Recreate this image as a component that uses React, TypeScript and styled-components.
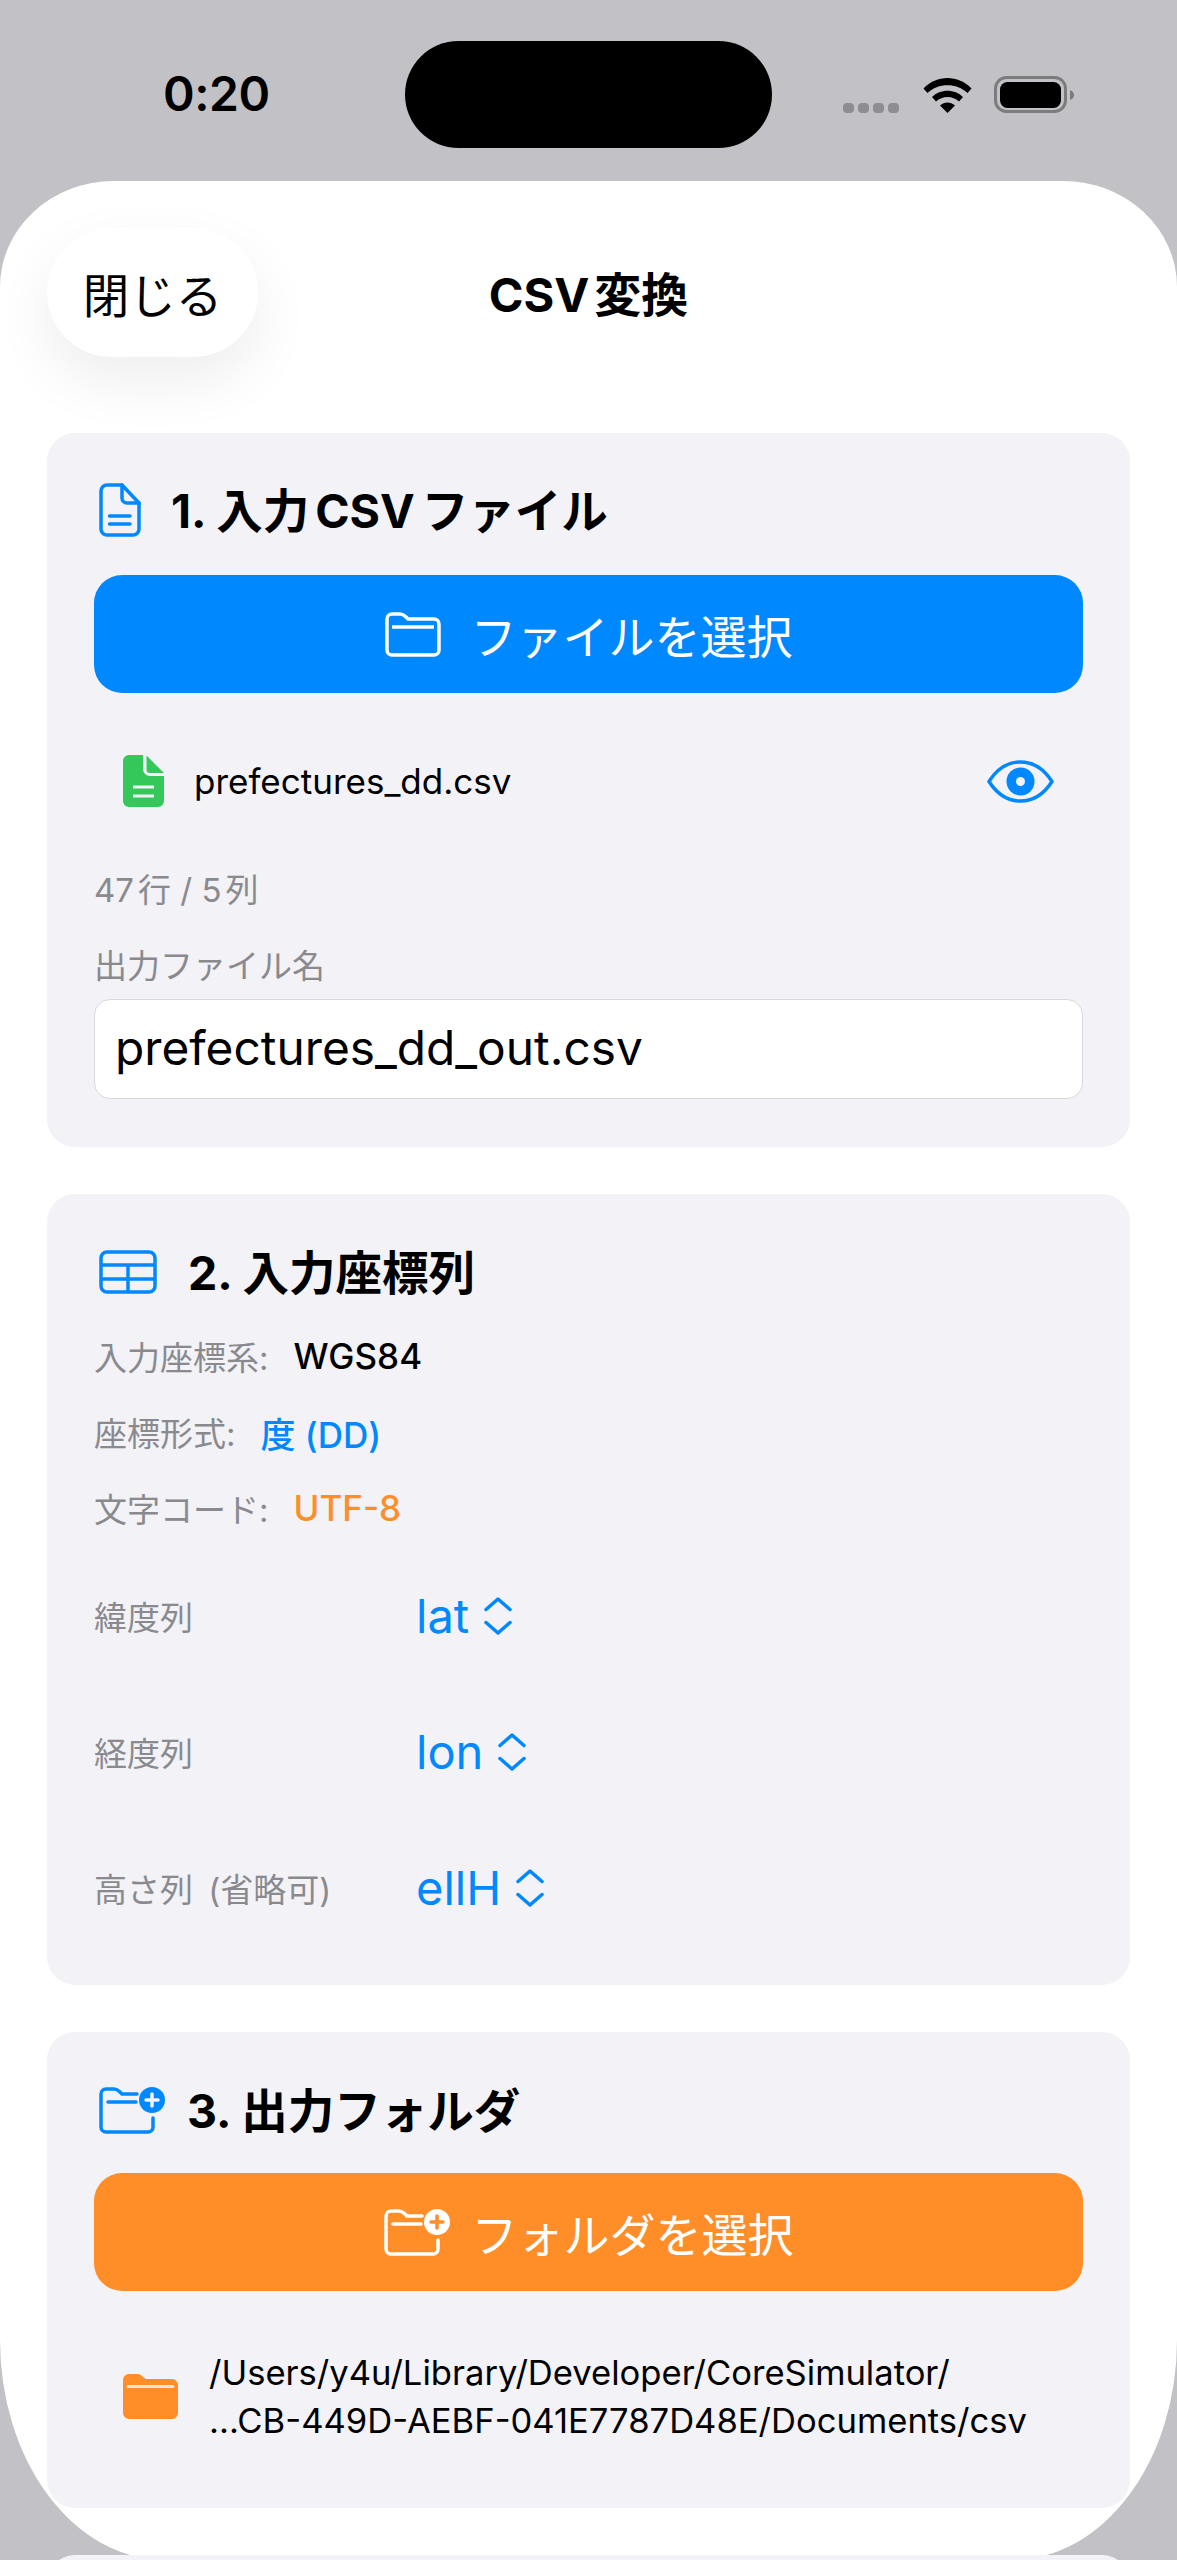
import React from 'react';
import styled, { createGlobalStyle } from 'styled-components';

const BLUE = '#0088ff';
const ORANGE = '#ff8d28';
const GREEN = '#34c759';
const GRAY = '#8a8a8e';
const CARD = '#f2f2f7';

const GlobalStyle = createGlobalStyle`
  html, body {
    margin: 0;
    padding: 0;
    background: #c2c1c6;
  }
  body {
    font-family: Inter, "Noto Sans CJK JP", sans-serif;
    color: #000;
  }
  #root {
    height: 2560px;
    overflow: hidden;
  }
`;

const StatusBar = styled.div`
  display: grid;
  grid-template-columns: 405px 367px 1fr;
  height: 181px;
`;

const Time = styled.div`
  align-self: center;
  padding: 0 0 0 163px;
  margin-top: 6px;
  font-size: 48px;
  font-weight: 600;
  letter-spacing: -0.5px;
`;

const Island = styled.div`
  margin-top: 41px;
  height: 107px;
  background: #000;
  border-radius: 54px;
`;

const StatusIcons = styled.div`
  display: flex;
  align-items: flex-start;
  padding: 76px 0 0 71px;
`;

const Sheet = styled.div`
  height: 2379px;
  background: #fff;
  border-radius: 114px 114px 0 0 / 106px 106px 0 0;
  border-bottom-left-radius: 165px 220px;
  border-bottom-right-radius: 165px 220px;
  padding: 47px 47px 0;
  box-sizing: border-box;
`;

const Header = styled.div`
  display: grid;
  grid-template-columns: 1fr auto 1fr;
  align-items: center;
  margin-bottom: 76px;
`;

const CloseButton = styled.div`
  justify-self: start;
  width: 211px;
  height: 129px;
  border-radius: 65px;
  background: #fff;
  box-shadow: 0 24px 60px rgba(0, 0, 0, 0.07);
  display: flex;
  align-items: center;
  justify-content: center;
  font-size: 46.500px;
`;

const SheetTitle = styled.div`
  font-size: 47px;
  font-weight: 700;
  margin-top: -3px;
`;

/* SwiftUI puts a little air between latin and kana, the font does not */
const Latin = styled.span<{ $l?: number; $r?: number }>`
  margin-left: ${p => p.$l ?? 0}px;
  margin-right: ${p => p.$r ?? 0}px;
`;

const Card = styled.section<{ $top: number; $bottom: number }>`
  background: ${CARD};
  border-radius: 28px;
  padding: ${p => p.$top}px 47px ${p => p.$bottom}px;
  margin-bottom: 47px;
`;

const TitleRow = styled.div<{ $gap: number }>`
  display: flex;
  align-items: center;
  height: 54px;
  padding-left: 5px;
  gap: ${p => p.$gap}px;
  color: ${BLUE};
`;

const TitleText = styled.h2`
  margin: -5px 0 0;
  font-size: 46.500px;
  font-weight: 700;
  color: #000;
`;

const ActionButton = styled.div<{ $color: string; $gap: number; $mt: number }>`
  margin-top: ${p => p.$mt}px;
  height: 118px;
  border-radius: 28px;
  background: ${p => p.$color};
  color: #fff;
  display: flex;
  align-items: center;
  justify-content: center;
  gap: ${p => p.$gap}px;
  font-size: 46px;
  font-weight: 400;
`;

const PathRow = styled.div<{ $mt: number; $gap: number; $size: number }>`
  margin-top: ${p => p.$mt}px;
  display: flex;
  align-items: center;
  padding-left: 29px;
  gap: ${p => p.$gap}px;
  font-size: ${p => p.$size}px;
  line-height: 48px;
`;

const FileName = styled.div`
  flex: 1;
`;

const EyeSlot = styled.div`
  display: flex;
  color: ${BLUE};
  padding-right: 29px;
`;

const Caption = styled.div<{ $mt: number }>`
  margin-top: ${p => p.$mt}px;
  font-size: 33px;
  line-height: 40px;
  color: ${GRAY};
`;

const NameInput = styled.div`
  margin-top: 13px;
  height: 100px;
  box-sizing: border-box;
  background: #fff;
  border: 1.5px solid #d9d9dd;
  border-radius: 16px;
  padding: 0 0 3px 20px;
  display: flex;
  align-items: center;
  font-size: 47.800px;
`;

const InfoList = styled.div`
  margin-top: 37px;
  display: flex;
  flex-direction: column;
  gap: 36px;
`;

const InfoRow = styled.div`
  display: flex;
  align-items: center;
  height: 40px;
  gap: 25px;
  font-size: 33px;
  color: ${GRAY};
`;

const InfoValue = styled.span<{ $color: string }>`
  font-size: 35px;
  font-weight: 500;
  color: ${p => p.$color};
`;

const PickerList = styled.div`
  margin-top: 59px;
  display: flex;
  flex-direction: column;
  gap: 80px;
`;

const PickerRow = styled.div`
  display: grid;
  grid-template-columns: 322px 1fr;
  align-items: center;
  height: 56px;
  font-size: 33px;
  word-spacing: 6px;
  color: ${GRAY};
`;

const PickerValue = styled.div`
  display: flex;
  align-items: center;
  gap: 15px;
  font-size: 47px;
  color: ${BLUE};
`;

const NextCard = styled.div`
  margin-top: 1px;
  height: 300px;
  background: ${CARD};
  border-radius: 28px;
`;

const CellDots = () => (
  <svg width="57" height="10" viewBox="0 0 57 10" style={{ marginTop: 27 }}>
    {[0, 15, 30, 45].map(x => (
      <rect key={x} x={x} width="11" height="10" rx="4" fill="#8e8e92" />
    ))}
  </svg>
);

const Wifi = () => (
  <svg width="49" height="36" viewBox="0 0 49 36" style={{ marginLeft: 23, marginTop: 1 }}>
    <path d="M0.5 11.5 C13.5 -2.5 35.5 -2.5 48.5 11.5 L44.5 16 C34 5.5 15 5.5 4.5 16Z" fill="#000" />
    <path d="M9 20 C17 11.5 32 11.5 40 20 L36 24.5 C29.5 18.5 19.5 18.5 13 24.5Z" fill="#000" />
    <path d="M17 28.5 C21.5 24.5 27.5 24.5 32 28.5 L24.5 36Z" fill="#000" />
  </svg>
);

const Battery = () => (
  <svg width="81" height="38" viewBox="0 0 81 38" style={{ marginLeft: 22 }}>
    <rect x="1.5" y="1.5" width="70" height="34" rx="11" fill="none" stroke="#7c7c7e" strokeWidth="3" />
    <rect x="6" y="6" width="61" height="26" rx="7.5" fill="#000" />
    <path d="M76 14 C79 15 80 17 80 19 C80 21 79 23 76 24Z" fill="#7c7c7e" />
  </svg>
);

const DocOutline = () => (
  <svg width="42" height="54" viewBox="0 0 42 54" fill="none" stroke="currentColor" strokeWidth="3.500" strokeLinejoin="round" strokeLinecap="round">
    <path d="M8 2H23L40 20V46A6 6 0 0 1 34 52H8A6 6 0 0 1 2 46V8A6 6 0 0 1 8 2Z" />
    <path d="M23 2V15A5 5 0 0 0 28 20H40" />
    <path d="M10.500 33H31M10.500 41H31" />
  </svg>
);

const DocFilled = () => (
  <svg width="41" height="52" viewBox="0 0 41 52">
    <path d="M6 0H20V14A7 7 0 0 0 27 21H41V46A6 6 0 0 1 35 52H6A6 6 0 0 1 0 46V6A6 6 0 0 1 6 0Z" fill={GREEN} />
    <path d="M23.500 0.500 L41 18H27A3.500 3.500 0 0 1 23.500 14.500Z" fill={GREEN} />
    <path d="M10 32H31M10 41H31" stroke={CARD} strokeWidth="3" />
  </svg>
);

const Eye = () => (
  <svg width="67" height="43" viewBox="0 0 67 43" style={{ display: 'block' }}>
    <path d="M2 21.500C10 9 21 2 33.500 2S57 9 65 21.500C57 34 46 41 33.500 41S10 34 2 21.500Z" fill="none" stroke="currentColor" strokeWidth="3.500" strokeLinejoin="round" />
    <circle cx="33.500" cy="21.500" r="14" fill="currentColor" />
    <circle cx="33.500" cy="21.500" r="4.500" fill={CARD} />
  </svg>
);

const FolderOutline = () => (
  <svg width="56" height="45" viewBox="0 0 56 45" fill="none" stroke="currentColor" strokeWidth="3.500" strokeLinejoin="round">
    <path d="M2 7A5 5 0 0 1 7 2H15C18 2 19 3 21 5L23 7H49A5 5 0 0 1 54 12V38A5 5 0 0 1 49 43H7A5 5 0 0 1 2 38Z" />
    <path d="M7 15H49" />
  </svg>
);

const FolderFilled = () => (
  <svg width="55" height="45" viewBox="0 0 55 45">
    <path d="M0 6A6 6 0 0 1 6 0H14C17 0 18 1 20 3L23 5H49A6 6 0 0 1 55 11V39A6 6 0 0 1 49 45H6A6 6 0 0 1 0 39Z" fill={ORANGE} />
    <path d="M5 12.500H50" stroke={CARD} strokeWidth="3" opacity="0.85" strokeLinecap="round" />
  </svg>
);

const FolderPlus = ({ knock }: { knock: string }) => (
  <svg width="66" height="47" viewBox="0 0 66 47" fill="none" stroke="currentColor" strokeWidth="3.500" strokeLinejoin="round" strokeLinecap="round">
    <path d="M38 7H23L21 5C19 3 18 2 15 2H7A5 5 0 0 0 2 7V40A5 5 0 0 0 7 45H49A5 5 0 0 0 54 40V31" />
    <path d="M9 15H37" />
    <circle cx="53" cy="13" r="13" fill="currentColor" stroke="none" />
    <path d="M53 7V19M47 13H59" stroke={knock} />
  </svg>
);

const TableIcon = () => (
  <svg width="58" height="44" viewBox="0 0 58 44" fill="none" stroke="currentColor" strokeWidth="3.500">
    <rect x="2" y="2" width="54" height="40" rx="6" />
    <path d="M2 15H56M2 29H56M29 15V42" />
  </svg>
);

const UpDown = () => (
  <svg width="28" height="38" viewBox="0 0 28 38" fill="none" stroke="currentColor" strokeWidth="3.500" strokeLinecap="round" strokeLinejoin="round">
    <path d="M2 12.500L14 2L26 12.500" />
    <path d="M2 25.500L14 36L26 25.500" />
  </svg>
);

export default function App() {
  return (
    <>
      <GlobalStyle />
      <StatusBar>
        <Time>0:20</Time>
        <Island />
        <StatusIcons>
          <CellDots />
          <Wifi />
          <Battery />
        </StatusIcons>
      </StatusBar>
      <Sheet>
        <Header>
          <CloseButton>閉じる</CloseButton>
          <SheetTitle>
            <Latin $r={5}>CSV</Latin>変換
          </SheetTitle>
          <span />
        </Header>

        <Card $top={50} $bottom={48}>
          <TitleRow $gap={30}>
            <DocOutline />
            <TitleText>
              1. 入力<Latin $l={6} $r={7}>CSV</Latin>ファイル
            </TitleText>
          </TitleRow>
          <ActionButton $color={BLUE} $gap={30} $mt={38}>
            <FolderOutline />
            ファイルを選択
          </ActionButton>
          <PathRow $mt={62} $gap={30} $size={35}>
            <DocFilled />
            <FileName>prefectures_dd.csv</FileName>
            <EyeSlot>
              <Eye />
            </EyeSlot>
          </PathRow>
          <Caption $mt={63}>
            <Latin $r={4}>47</Latin>行 / <Latin $r={4}>5</Latin>列
          </Caption>
          <Caption $mt={36}>出力ファイル名</Caption>
          <NameInput>prefectures_dd_out.csv</NameInput>
        </Card>

        <Card $top={51} $bottom={70}>
          <TitleRow $gap={31}>
            <TableIcon />
            <TitleText>2. 入力座標列</TitleText>
          </TitleRow>
          <InfoList>
            <InfoRow>
              入力座標系:
              <InfoValue $color="#000">WGS84</InfoValue>
            </InfoRow>
            <InfoRow>
              座標形式:
              <InfoValue $color={BLUE}>度 (DD)</InfoValue>
            </InfoRow>
            <InfoRow>
              文字コード:
              <InfoValue $color={ORANGE}>UTF-8</InfoValue>
            </InfoRow>
          </InfoList>
          <PickerList>
            <PickerRow>
              緯度列
              <PickerValue>
                lat
                <UpDown />
              </PickerValue>
            </PickerRow>
            <PickerRow>
              経度列
              <PickerValue>
                lon
                <UpDown />
              </PickerValue>
            </PickerRow>
            <PickerRow>
              高さ列 (省略可)
              <PickerValue>
                ellH
                <UpDown />
              </PickerValue>
            </PickerRow>
          </PickerList>
        </Card>

        <Card $top={51} $bottom={64}>
          <TitleRow $gap={22}>
            <FolderPlus knock={CARD} />
            <TitleText>3. 出力フォルダ</TitleText>
          </TitleRow>
          <ActionButton $color={ORANGE} $gap={22} $mt={36}>
            <FolderPlus knock={ORANGE} />
            フォルダを選択
          </ActionButton>
          <PathRow $mt={57} $gap={31} $size={34.6}>
            <FolderFilled />
            <div>
              /Users/y4u/Library/Developer/CoreSimulator/
              <br />
              ...CB-449D-AEBF-041E7787D48E/Documents/csv
            </div>
          </PathRow>
        </Card>

        <NextCard />
      </Sheet>
    </>
  );
}
